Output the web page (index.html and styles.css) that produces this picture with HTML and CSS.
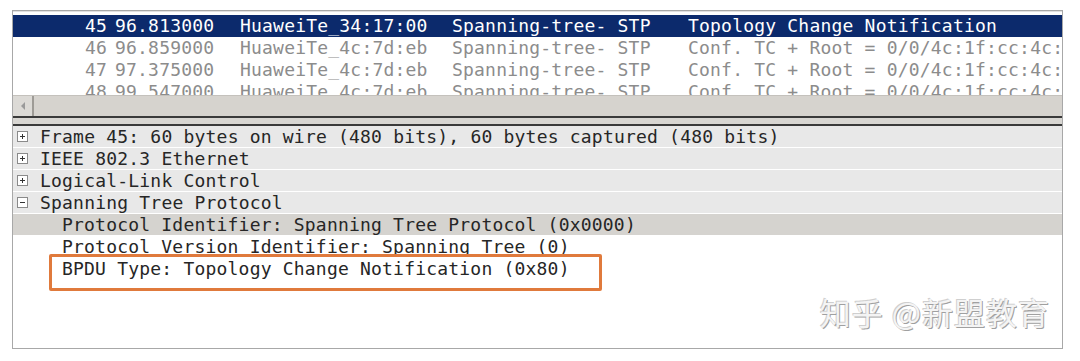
FILE: index.html
```html
<!DOCTYPE html>
<html lang="en">
<head>
<meta charset="UTF-8">
<title>Wireshark - STP TCN</title>
<link rel="stylesheet" href="styles.css">
</head>
<body>
<div class="frame">
  <div class="packet-list">
    <div class="prow selected">
      <span class="c-no">45</span><span class="c-time">96.813000</span><span class="c-src">HuaweiTe_34:17:00</span><span class="c-proto">Spanning-tree- STP</span><span class="c-info">Topology Change Notification</span>
    </div>
    <div class="prow">
      <span class="c-no">46</span><span class="c-time">96.859000</span><span class="c-src">HuaweiTe_4c:7d:eb</span><span class="c-proto">Spanning-tree- STP</span><span class="c-info">Conf. TC + Root = 0/0/4c:1f:cc:4c:</span>
    </div>
    <div class="prow">
      <span class="c-no">47</span><span class="c-time">97.375000</span><span class="c-src">HuaweiTe_4c:7d:eb</span><span class="c-proto">Spanning-tree- STP</span><span class="c-info">Conf. TC + Root = 0/0/4c:1f:cc:4c:</span>
    </div>
    <div class="prow">
      <span class="c-no">48</span><span class="c-time">99.547000</span><span class="c-src">HuaweiTe_4c:7d:eb</span><span class="c-proto">Spanning-tree- STP</span><span class="c-info">Conf. TC + Root = 0/0/4c:1f:cc:4c:</span>
    </div>
  </div>

  <div class="hscroll">
    <div class="arrow-btn">
      <svg width="6" height="8" viewBox="0 0 6 8"><path d="M5 0 L1 4 L5 8 Z" fill="#9a9a9a"/></svg>
    </div>
  </div>

  <div class="splitter"></div>

  <div class="details">
    <div class="drow">
      <svg class="tog" width="11" height="11" viewBox="0 0 11 11"><rect x="0.5" y="0.5" width="10" height="10" fill="#fff" stroke="#8a8a8a"/><path d="M3 5.5 H8 M5.5 3 V8" stroke="#333" stroke-width="1"/></svg>
      <span>Frame 45: 60 bytes on wire (480 bits), 60 bytes captured (480 bits)</span>
    </div>
    <div class="drow">
      <svg class="tog" width="11" height="11" viewBox="0 0 11 11"><rect x="0.5" y="0.5" width="10" height="10" fill="#fff" stroke="#8a8a8a"/><path d="M3 5.5 H8 M5.5 3 V8" stroke="#333" stroke-width="1"/></svg>
      <span>IEEE 802.3 Ethernet</span>
    </div>
    <div class="drow">
      <svg class="tog" width="11" height="11" viewBox="0 0 11 11"><rect x="0.5" y="0.5" width="10" height="10" fill="#fff" stroke="#8a8a8a"/><path d="M3 5.5 H8 M5.5 3 V8" stroke="#333" stroke-width="1"/></svg>
      <span>Logical-Link Control</span>
    </div>
    <div class="drow">
      <svg class="tog" width="11" height="11" viewBox="0 0 11 11"><rect x="0.5" y="0.5" width="10" height="10" fill="#fff" stroke="#8a8a8a"/><path d="M3 5.5 H8" stroke="#333" stroke-width="1"/></svg>
      <span>Spanning Tree Protocol</span>
    </div>
    <div class="drow child current">Protocol Identifier: Spanning Tree Protocol (0x0000)</div>
    <div class="drow child plain">Protocol Version Identifier: Spanning Tree (0)</div>
    <div class="drow child plain">BPDU Type: Topology Change Notification (0x80)</div>
  </div>

  <div class="highlight"></div>
  <div class="watermark">知乎 @新盟教育</div>
</div>
</body>
</html>
```

FILE: styles.css
```css
body {
    margin: 0;
    background: #fff;
    font-family: "DejaVu Sans Mono", "Liberation Mono", monospace;
    font-size: 18px;
    letter-spacing: 0.2px;
}

.frame {
    position: relative;
    margin: 10px 0 0 12px;
    width: 1049px;
    height: 337px;
    border: 1px solid #a8a8a8;
    background: #fff;
    display: flex;
    flex-direction: column;
}

/* packet list */
.packet-list {
    height: 80px;
    padding-top: 3px;
    overflow: hidden;
    border-top: 1px solid #e0e0e0;
}

.prow {
    display: flex;
    height: 22px;
    line-height: 21px;
    color: #8c8c8c;
    white-space: nowrap;
}

.prow.selected {
    background: #0c2a6c;
    color: #fff;
}

.c-no {
    width: 94px;
    text-align: right;
    flex: none;
}

.c-time {
    width: 125px;
    margin-left: 8px;
    flex: none;
}

.c-src {
    width: 212px;
    flex: none;
}

.c-proto {
    width: 236px;
    flex: none;
}

.c-info {
    flex: 1;
    overflow: hidden;
}

/* horizontal scrollbar */
.hscroll {
    height: 20px;
    background: #d6d3ce;
    border-top: 1px solid #c4c1bc;
    display: flex;
}

.arrow-btn {
    width: 19px;
    border-right: 2px solid #9e9b96;
    display: flex;
    align-items: center;
    justify-content: center;
    background: #dcdad6;
}

.splitter {
    height: 6px;
    background: #d8d6d2;
    border-top: 2px solid #3a3a3a;
    border-bottom: 2px solid #3a3a3a;
}

/* packet details */
.details {
    flex: 1;
    background: #fff;
}

.drow {
    display: flex;
    align-items: center;
    height: 21px;
    line-height: 21px;
    margin-bottom: 1px;
    padding-left: 4px;
    background: #e8e8e8;
    color: #262626;
    white-space: nowrap;
}

.tog {
    margin-right: 12px;
    flex: none;
}

.drow.child {
    padding-left: 49px;
}

.drow.current {
    background: #d5d3cf;
}

.drow.plain {
    background: #fff;
}

/* annotation */
.highlight {
    position: absolute;
    left: 36px;
    top: 243px;
    width: 547px;
    height: 31px;
    border: 3px solid #e07a3c;
    border-radius: 2px;
}

.watermark {
    position: absolute;
    right: 12px;
    bottom: 14px;
    font-family: "Noto Sans CJK SC", sans-serif;
    font-size: 31px;
    letter-spacing: 1px;
    color: #f4f4f4;
    text-shadow: 1px 1px 0 #a0a0a0, -1px -1px 0 #cfcfcf;
}
```
